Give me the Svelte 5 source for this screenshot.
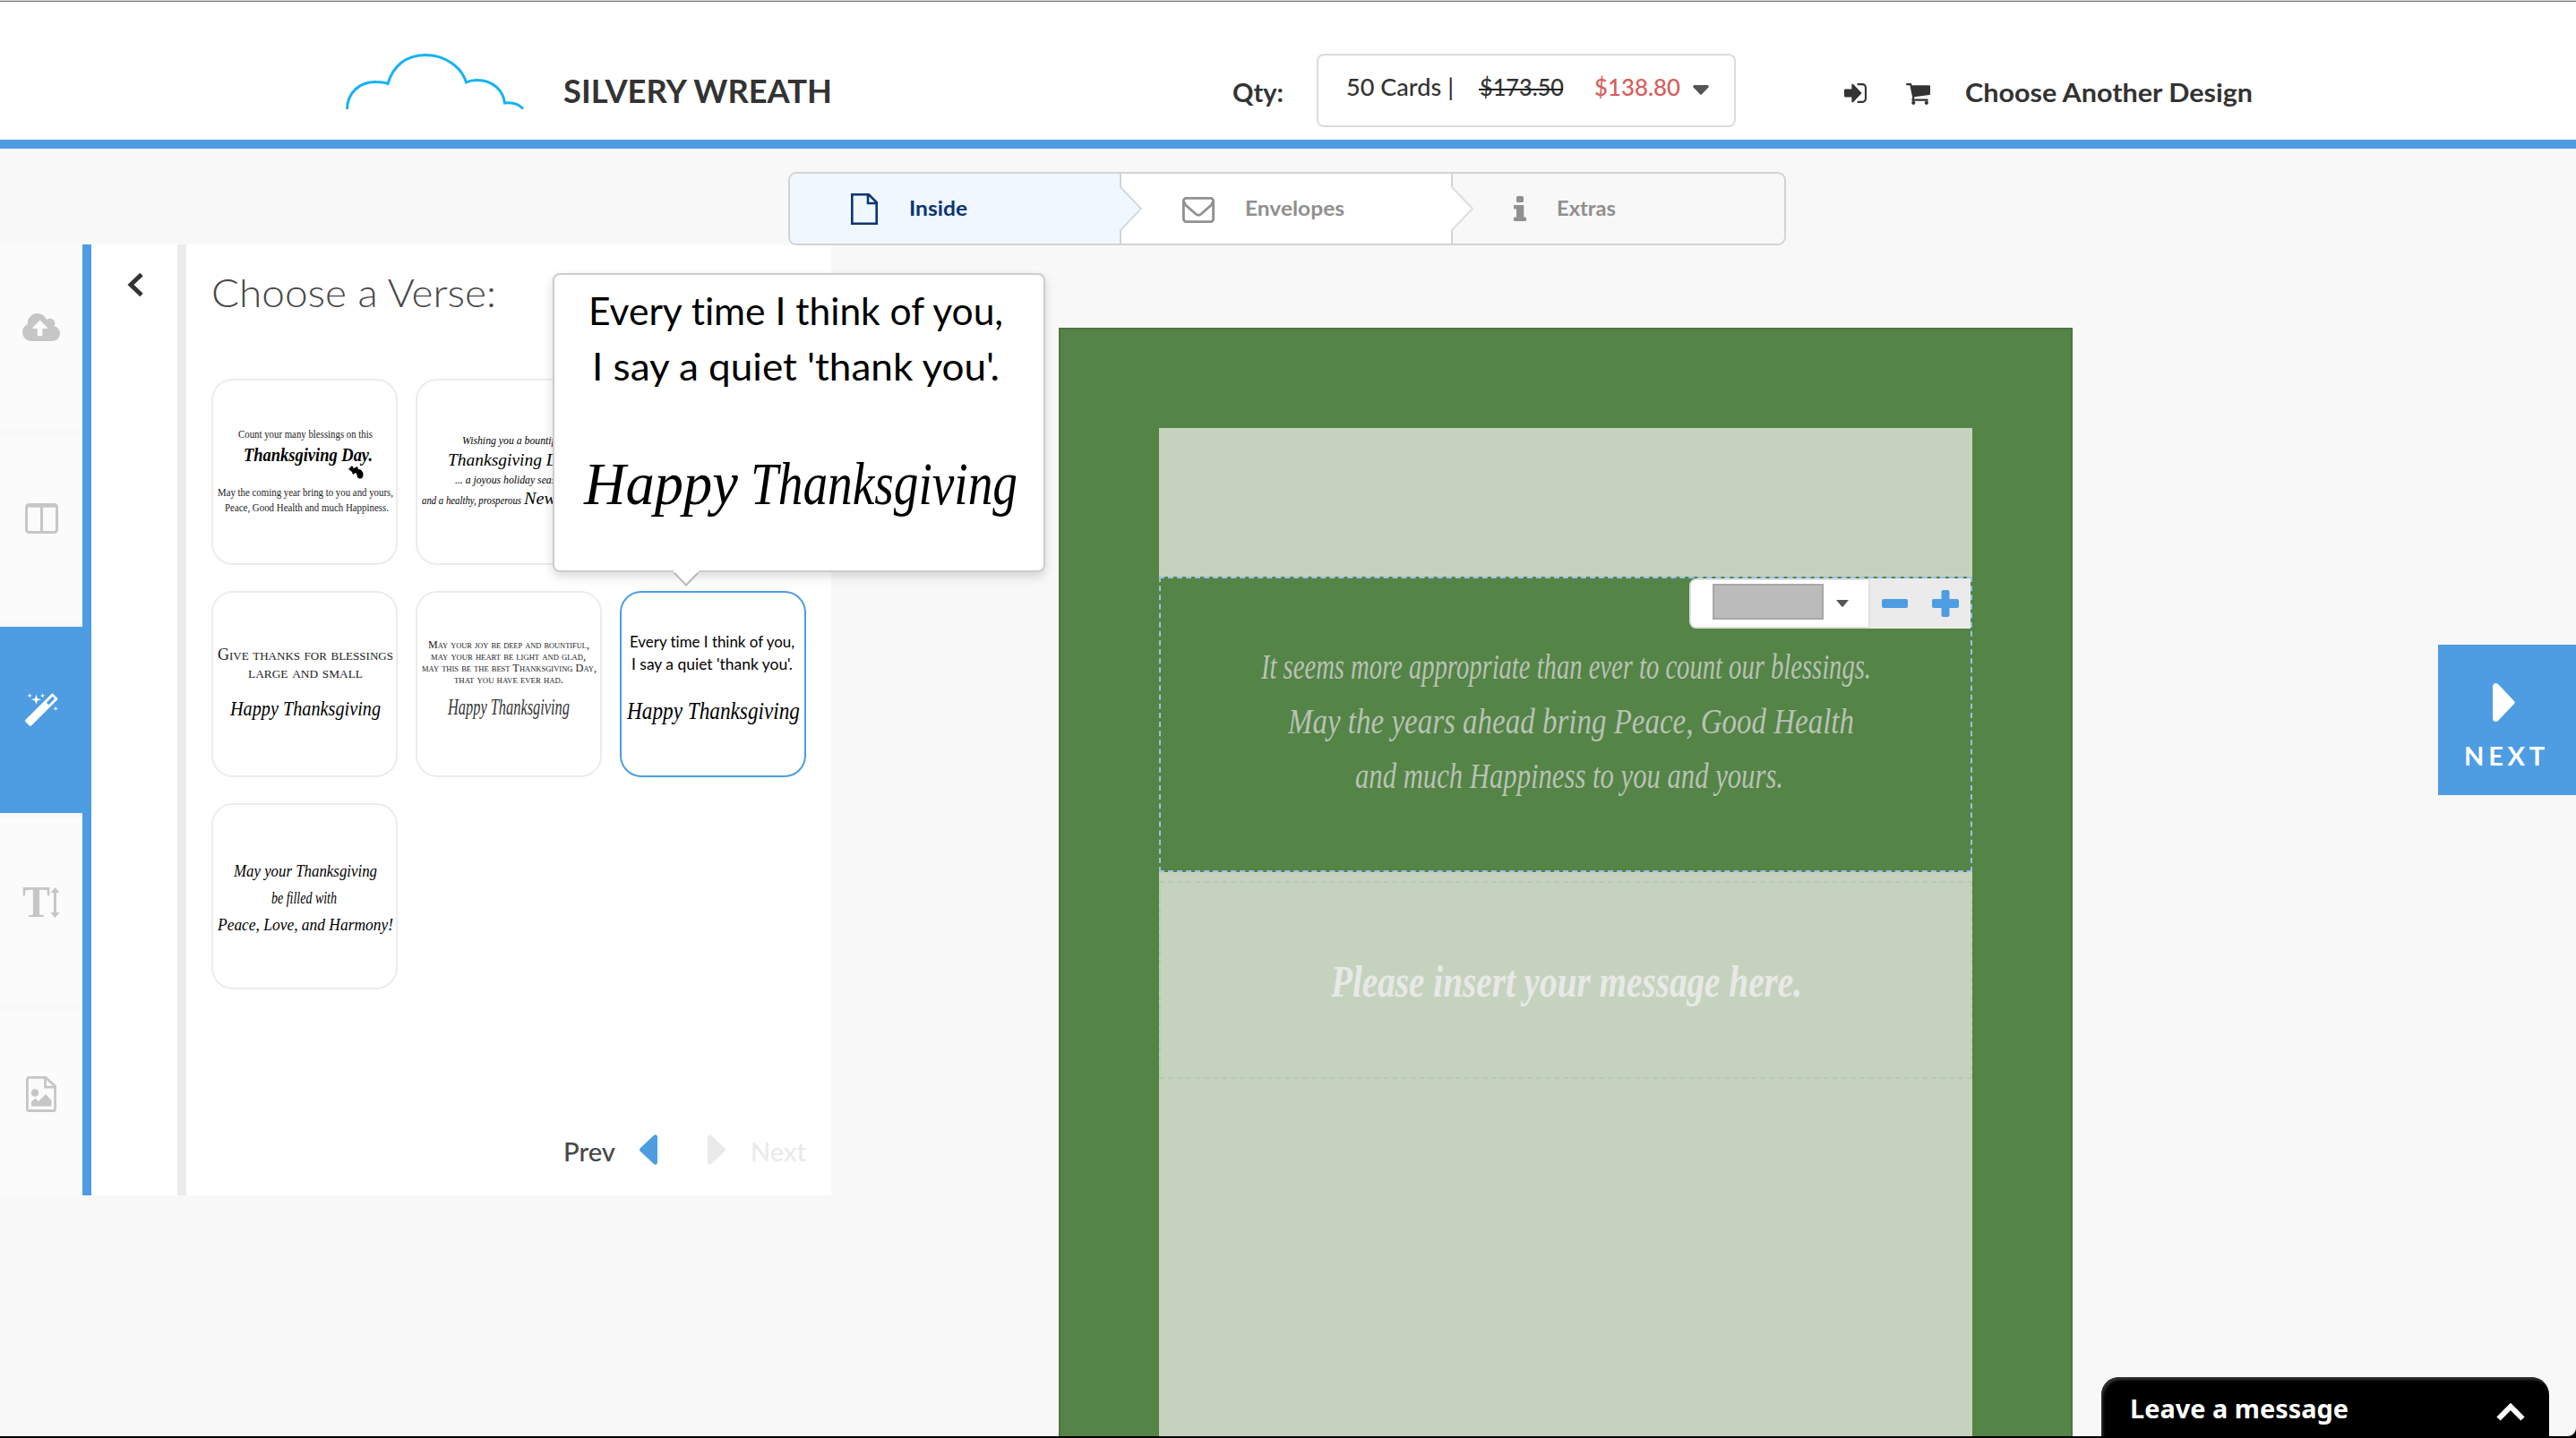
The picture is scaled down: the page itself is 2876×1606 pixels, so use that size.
<script>
  const tools = ['upload', 'layout', 'verse', 'text', 'image'];
  let activeTool = $state('verse');
  let selected = $state(5);

  // Each line: t = text, x/y = left edge and baseline, w = set width, s = font size, k = style
  const verses = [
    {
      leaf: true,
      lines: [
        { t: 'Count your many blessings on this', x: 30, y: 66, w: 150, s: 13, k: 'old' },
        { t: 'Thanksgiving Day.', x: 36, y: 92, w: 144, s: 20, k: 'script heavy' },
        { t: 'May the coming year bring to you and yours,', x: 7, y: 131, w: 196, s: 13, k: 'old' },
        { t: 'Peace, Good Health and much Happiness.', x: 15, y: 148, w: 183, s: 13, k: 'old' }
      ]
    },
    {
      lines: [
        { t: 'Wishing you a bountiful', x: 52, y: 73, w: 112, s: 12, k: 'script' },
        { t: 'Thanksgiving Day,', x: 36, y: 97, w: 146, s: 19, k: 'script' },
        { t: '... a joyous holiday season', x: 44, y: 117, w: 124, s: 12, k: 'script' },
        { t: 'and a healthy, prosperous', x: 7, y: 140, w: 111, s: 12, k: 'script' },
        { t: 'New Year.', x: 121, y: 140, w: 80, s: 19, k: 'script' }
      ]
    },
    { lines: [] },
    {
      lines: [
        { t: 'Give thanks for blessings', x: 7, y: 77, w: 196, s: 18, k: 'caps' },
        { t: 'large and small', x: 41, y: 97, w: 128, s: 18, k: 'caps' },
        { t: 'Happy Thanksgiving', x: 21, y: 139, w: 168, s: 23, k: 'script' }
      ]
    },
    {
      lines: [
        { t: 'May your joy be deep and bountiful,', x: 14, y: 64, w: 180, s: 13, k: 'caps' },
        { t: 'may your heart be light and glad,', x: 17, y: 77, w: 173, s: 13, k: 'caps' },
        { t: 'may this be the best Thanksgiving Day,', x: 7, y: 90, w: 195, s: 13, k: 'caps' },
        { t: 'that you have ever had.', x: 43, y: 103, w: 122, s: 13, k: 'caps' },
        { t: 'Happy Thanksgiving', x: 36, y: 138, w: 136, s: 25, k: 'script thin' }
      ]
    },
    {
      lines: [
        { t: 'Every time I think of you,', x: 11, y: 63, w: 184, s: 17, k: 'humanist' },
        { t: "I say a quiet 'thank you'.", x: 13, y: 88, w: 180, s: 17, k: 'humanist' },
        { t: 'Happy Thanksgiving', x: 8, y: 143, w: 193, s: 27, k: 'script' }
      ]
    },
    {
      lines: [
        { t: 'May your Thanksgiving', x: 25, y: 82, w: 160, s: 19, k: 'script' },
        { t: 'be filled with', x: 67, y: 112, w: 73, s: 18, k: 'script' },
        { t: 'Peace, Love, and Harmony!', x: 7, y: 142, w: 196, s: 19, k: 'script' }
      ]
    }
  ];
</script>

{#snippet label(text, width, size, kind)}
  <svg class="label {kind}" {width} height={Math.round(size * 0.72)}>
    <text x="0" y={Math.round(size * 0.72)} font-size={size} textLength={width} lengthAdjust="spacingAndGlyphs">{text}</text>
  </svg>
{/snippet}

{#snippet toolIcon(name)}
  {#if name === 'upload'}
    <svg class="tool-icon" width="42" height="31" viewBox="-64 128 1920 1408"><path fill="currentColor" d="M1216 864q0-14-9-23l-352-352q-9-9-23-9t-23 9l-351 351q-10 12-10 24 0 14 9 23t23 9h224v352q0 13 9.500 22.500t22.500 9.500h192q13 0 22.500-9.500t9.500-22.500v-352h224q13 0 22.500-9.500t9.500-22.500zm640 288q0 159-112.500 271.500t-271.500 112.500h-1088q-185 0-316.500-131.500t-131.500-316.500q0-130 70-240t188-165q-2-30-2-43 0-212 150-362t362-150q156 0 285.500 87t188.500 231q71-62 166-62 106 0 181 75t75 181q0 76-41 138 130 31 213.500 135.500t83.500 238.500z" /></svg>
  {:else if name === 'layout'}
    <svg class="tool-icon" width="37" height="34" viewBox="0 0 37 34" fill="none" stroke="currentColor" stroke-width="3"><rect x="1.500" y="1.500" width="34" height="31" rx="3" /><path d="M2 3.200h33M18.500 3v29" /></svg>
  {:else if name === 'verse'}
    <svg class="tool-icon" width="37" height="37" viewBox="91 0 1637 1637"><path fill="currentColor" d="M1254 581l293-293-107-107-293 293zm447-293q0 27-18 45l-1286 1286q-18 18-45 18t-45-18l-198-198q-18-18-18-45t18-45l1286-1286q18-18 45-18t45 18l198 198q18 18 18 45zm-1351-190l98 30-98 30-30 98-30-98-98-30 98-30 30-98zm350 162l196 60-196 60-60 196-60-196-196-60 196-60 60-196zm930 478l98 30-98 30-30 98-30-98-98-30 98-30 30-98zm-640-640l98 30-98 30-30 98-30-98-98-30 98-30 30-98z" /></svg>
  {:else if name === 'text'}
    <svg class="tool-icon text-icon" width="40" height="34" viewBox="0 0 40 34" fill="currentColor"><text class="tee" x="-1" y="33" font-size="50" textLength="31" lengthAdjust="spacingAndGlyphs">T</text><path d="M35.500 0l5 6h-3.500v22h3.500l-5 6-5-6h3.500V6h-3.500z" /></svg>
  {:else}
    <svg class="tool-icon image-icon" width="34" height="40" viewBox="0 0 34 40" fill="none" stroke="currentColor" stroke-width="2.800"><path d="M3.400 1.400H22L32.600 11v25.500q0 2-2 2H3.400q-2 0-2-2v-33q0-2.100 2-2.100zM21.500 1.400V12.200h11" /><circle cx="10" cy="18.500" r="4.200" fill="currentColor" stroke="none" /><path d="M6 33.500v-5l4.500-4 3.500 3.500 8-8 6.500 7v6.500z" fill="currentColor" stroke="none" /></svg>
  {/if}
{/snippet}

<div class="page">
  <header class="topbar">
    <svg class="cloud" width="199" height="63" viewBox="0 0 199 63" fill="none" stroke="#14b3f4" stroke-width="3"><path d="M1.500 62C2 43 16 31 34 31.500q8 0 13 2C53 13 68 1.500 89 1.500c22 0 40 13 45.500 30.500q5-2.500 12-2.500c18 0 29.500 12 31 25.500q13-1.500 20.500 6.500" /></svg>
    <h1 class="design">{@render label('SILVERY WREATH', 300, 36, 'ink bold')}</h1>
    <div class="qty">{@render label('Qty:', 57, 28, 'ink bold')}</div>
    <button class="qty-box">
      {@render label('50 Cards |', 120, 26, 'ink medium')}
      <s class="old-price">{@render label('$173.50', 94, 26, 'ink medium')}</s>
      {@render label('$138.80', 96, 26, 'sale medium')}
      <svg class="caret" width="18" height="11" viewBox="0 0 18 11" fill="#555"><path d="M1.500 0h15q2 .7 1 2.500L10 10.200q-1 1-2 0L.5 2.500Q-.5.700 1.500 0z" /></svg>
    </button>
    <div class="account">
      <svg width="25" height="22" viewBox="128 256 1536 1280" preserveAspectRatio="none" fill="#333"><path d="M1312 896q0 26-19 45l-544 544q-19 19-45 19t-45-19-19-45v-288h-448q-26 0-45-19t-19-45v-384q0-26 19-45t45-19h448v-288q0-26 19-45t45-19 45 19l544 544q19 19 19 45zm352-352v704q0 119-84.500 203.500t-203.500 84.500h-320q-13 0-22.500-9.500t-9.500-22.500q0-4-1-20t-.5-26.500 3-23.500 10-19.500 20.500-6.500h320q66 0 113-47t47-113v-704q0-66-47-113t-113-47h-312l-11.500-1-11.500-3-8-5.500-7-9-2-13.500q0-4-1-20t-.5-26.500 3-23.500 10-19.500 20.500-6.500h320q119 0 203.500 84.500t84.500 203.500z" /></svg>
      <svg class="cart" width="27" height="24" viewBox="64 256 1664 1408" preserveAspectRatio="none" fill="#333"><path d="M704 1536q0 52-38 90t-90 38-90-38-38-90 38-90 90-38 90 38 38 90zm896 0q0 52-38 90t-90 38-90-38-38-90 38-90 90-38 90 38 38 90zm128-1088v512q0 24-16.500 42.500t-40.500 21.500l-1044 122q13 60 13 70 0 16-24 64h920q26 0 45 19t19 45-19 45-45 19h-1024q-26 0-45-19t-19-45q0-11 8-31.500t16-36 21.500-40 15.500-29.500l-177-823h-204q-26 0-45-19t-19-45 19-45 45-19h256q16 0 28.500 6.500t19.500 15.500 13 24.500 8 26 5.500 29.500 4.500 26h1201q26 0 45 19t19 45z" /></svg>
      {@render label('Choose Another Design', 321, 29, 'ink bold')}
    </div>
  </header>

  <nav class="steps">
    <div class="step current">
      <svg class="file" width="30" height="35" viewBox="0 0 30 35" fill="none" stroke="#0a3575" stroke-width="2.600"><path d="M1.300 1.300H20L28.700 10v23.700H1.300zM19 1.300V11h9.700" /></svg>
      {@render label('Inside', 65, 23, 'navy bold')}
      <svg class="notch" width="26" height="50" viewBox="0 0 26 50"><path d="M0 0L24 25 0 50" fill="#f0f7ff" stroke="#d2d9e0" stroke-width="2" /></svg>
    </div>
    <div class="step open">
      <svg class="mail" width="36" height="29" viewBox="0 0 36 29" fill="none" stroke="#909090" stroke-width="2.800"><rect x="1.400" y="1.400" width="33.200" height="26.200" rx="3" /><path d="M2 5q0 2.500 2.500 4.700L15 19q3 2.400 6 0L31.500 9.700Q34 7.500 34 5" /></svg>
      {@render label('Envelopes', 111, 23, 'muted bold')}
      <svg class="notch" width="26" height="50" viewBox="0 0 26 50"><path d="M0 0L24 25 0 50" fill="#fff" stroke="#dedede" stroke-width="2" /></svg>
    </div>
    <div class="step last">
      <svg class="info" width="14" height="28" viewBox="0 0 14 28" fill="#909090"><rect x="3" y="0" width="8" height="7" rx="1.500" /><path d="M1 10h9.500q.8 0 .8.800V23.500H13q1 0 1 1V27q0 1-1 1H1q-1 0-1-1v-2.500q0-1 1-1h2V14.500H1q-1 0-1-1V11q0-1 1-1z" /></svg>
      {@render label('Extras', 66, 23, 'muted bold')}
    </div>
  </nav>

  <main class="workspace">
    <aside class="tools">
      {#each tools as tool}
        <button class="tool" class:on={tool === activeTool} onclick={() => (activeTool = tool)} aria-label={tool}>
          {@render toolIcon(tool)}
        </button>
      {/each}
    </aside>
    <div class="collapse">
      <svg width="19" height="28" viewBox="0 0 19 28" fill="none" stroke="#333" stroke-width="5"><path d="M16 2.500L4 14l12 11.500" /></svg>
    </div>

    <section class="panel">
      <h2>{@render label('Choose a Verse:', 318, 43, 'light')}</h2>
      <div class="grid">
        {#each verses as verse, i}
          {#if i === 2}
            <div class="slot"></div>
          {:else}
            <button class="card" class:picked={i === selected} onclick={() => (selected = i)} aria-label="Verse {i + 1}">
              <svg width="204" height="204" viewBox="2 2 204 204">
                {#each verse.lines as l}
                  <text class={l.k} x={l.x} y={l.y} font-size={l.s} textLength={l.w} lengthAdjust="spacingAndGlyphs">{l.t}</text>
                {/each}
                {#if verse.leaf}
                  <path d="M153 101l4-4 2 3 4-2 1 3 4 1-3 3-1 3-3-3-3 2-1-3z" />
                  <ellipse cx="166" cy="107" rx="3.500" ry="4.500" />
                {/if}
              </svg>
            </button>
          {/if}
        {/each}
      </div>
      <div class="pager">
        {@render label('Prev', 58, 29, 'slate medium')}
        <svg class="arrow-prev" width="20" height="34" viewBox="0 0 20 34" fill="#4e9ce2"><path d="M20 2v30q-1.500 3-4 1L1 19q-2-2 0-4L16 1q2.500-2 4 1z" /></svg>
        <svg class="arrow-next" width="20" height="34" viewBox="0 0 20 34" fill="#eaeaea"><path d="M0 2v30q1.500 3 4 1l15-14q2-2 0-4L4 1Q1.500-1 0 2z" /></svg>
        {@render label('Next', 62, 29, 'faint medium')}
      </div>

      <div class="preview">
        <svg width="546" height="330" viewBox="619 307 546 330">
          <text class="humanist" x="657" y="363" font-size="43" textLength="463" lengthAdjust="spacingAndGlyphs">Every time I think of you,</text>
          <text class="humanist" x="661" y="425" font-size="43" textLength="455" lengthAdjust="spacingAndGlyphs">I say a quiet 'thank you'.</text>
          <text class="script" x="652" y="563" font-size="68" textLength="172" lengthAdjust="spacingAndGlyphs">Happy</text>
          <text class="script" x="838" y="563" font-size="68" textLength="298" lengthAdjust="spacingAndGlyphs">Thanksgiving</text>
        </svg>
        <svg class="tip" width="30" height="18" viewBox="0 0 30 18"><path d="M1 1L15 15.500 29 1" fill="#fff" stroke="#b8b8b8" stroke-width="2" /><path d="M1 0h28" stroke="#fff" stroke-width="3" /></svg>
      </div>
    </section>

    <section class="sheet">
      <div class="paper">
        <div class="zone chosen">
          <div class="zone-bar">
            <div class="color-pick">
              <span class="swatch"></span>
              <svg width="14" height="8" viewBox="0 0 14 8" fill="#555"><path d="M0 0h14L7.700 7.400q-.7.700-1.400 0z" /></svg>
            </div>
            <div class="sizer">
              <svg width="29" height="10" viewBox="0 0 29 10" fill="#4e9ce2"><rect width="29" height="10" rx="2" /></svg>
              <svg width="30" height="30" viewBox="0 0 30 30" fill="#4e9ce2"><rect y="10" width="30" height="10" rx="2" /><rect x="10.500" y="0" width="9" height="30" rx="2" /></svg>
            </div>
          </div>
          <svg width="904" height="326" viewBox="1296 646 904 326">
            <text class="script pale" x="1408" y="758" font-size="39" textLength="681" lengthAdjust="spacingAndGlyphs">It seems more appropriate than ever to count our blessings.</text>
            <text class="script pale" x="1438" y="819" font-size="39" textLength="632" lengthAdjust="spacingAndGlyphs">May the years ahead bring Peace, Good Health</text>
            <text class="script pale" x="1513" y="880" font-size="39" textLength="478" lengthAdjust="spacingAndGlyphs">and much Happiness to you and yours.</text>
          </svg>
        </div>
        <div class="zone blank">
          <svg width="904" height="217" viewBox="1296 985 904 217">
            <text class="script hint" x="1486" y="1112" font-size="51" textLength="526" lengthAdjust="spacingAndGlyphs">Please insert your message here.</text>
          </svg>
        </div>
      </div>
    </section>
  </main>

  <button class="next">
    <svg width="25" height="43" viewBox="0 0 25 43" fill="#fff"><path d="M0 3.500Q.5 0 3.500 0 5 0 6.500 1.500L24 20q1.500 1.500 0 3L6.500 41.500Q5 43 3.500 43 .5 43 0 39.500z" /></svg>
    <span>NEXT</span>
  </button>

  <button class="chat">
    {@render label('Leave a message', 244, 29, 'chat-text')}
    <svg width="32" height="21" viewBox="0 0 32 21" fill="none" stroke="#fff" stroke-width="6"><path d="M2.500 18.500L16 5l13.500 13.500" /></svg>
  </button>
</div>

<style>
  :global(body) { background: #000; }
  .page {
    position: relative;
    box-sizing: border-box;
    width: 2876px;
    height: 1604px;
    overflow: hidden;
    background: #f8f8f8;
    border-bottom-right-radius: 9px;
    font-family: Lato, 'Open Sans', sans-serif;
  }
  .page * { box-sizing: border-box; }
  button { padding: 0; border: 0; background: none; font: inherit; text-align: left; }
  h1, h2 { margin: 0; font-size: 0; }
  svg { display: block; flex: none; overflow: visible; }

  .ink { fill: #333; }
  .sale { fill: #d95c5c; }
  .navy { fill: #0a3575; }
  .muted { fill: #8f8f8f; }
  .slate { fill: #484848; }
  .faint { fill: #eaeaea; }
  .light { fill: #484848; font-weight: 300; }
  .bold { font-weight: 700; }
  .medium { font-weight: 500; }
  .chat-text { fill: #fff; font-family: 'Noto Sans', 'Open Sans', sans-serif; font-weight: 700; }

  .script { font-family: 'Liberation Serif', serif; font-style: italic; }
  .heavy { font-weight: 700; }
  .thin { fill: #333; }
  .old { font-family: 'Liberation Serif', serif; fill: #222; }
  .caps { font-family: 'Liberation Serif', serif; font-variant: small-caps; fill: #222; }
  .humanist { font-family: Lato, sans-serif; font-variant-ligatures: none; fill: #000; }
  .pale { fill: #b9c2b6; }
  .hint { fill: #e8e9e7; font-weight: 700; }
  .tee { font-family: 'Liberation Serif', serif; font-weight: 700; }

  .topbar {
    display: flex;
    align-items: flex-start;
    height: 166px;
    padding: 58px 0 0 386px;
    background: #fff;
    border-top: 1px solid #d8d8d8;
    border-bottom: 10px solid #4e9ce2;
    box-shadow: inset 0 1px #777;
  }
  .cloud { margin-top: 1px; }
  .design { margin: 30px 0 0 44px; }
  .qty { margin: 35px 0 0 447px; }
  .qty-box {
    display: flex;
    align-items: flex-start;
    width: 468px;
    height: 82px;
    margin: 1px 0 0 37px;
    padding: 26px 0 0 31px;
    border: 2px solid #dcdcdc;
    border-radius: 8px;
  }
  .old-price { position: relative; margin: 0 34px 0 29px; text-decoration: none; }
  .old-price::after { content: ''; position: absolute; top: 11px; left: -1px; width: 94px; height: 2px; background: #222; }
  .caret { margin: 7px 0 0 14px; }
  .account { display: flex; align-items: flex-start; margin: 34px 0 0 121px; }
  .account .cart { margin: 0 39px 0 44px; }

  .steps {
    position: relative;
    z-index: 1;
    display: flex;
    width: 1114px;
    height: 82px;
    margin: 26px 0 0 880px;
    border: 2px solid #d3d3d3;
    border-radius: 9px;
  }
  .step { position: relative; display: flex; align-items: center; width: 370px; padding-bottom: 2px; }
  .step + .step { border-left: 2px solid #d3d3d3; }
  .current { width: 368px; background: #f0f7ff; border-radius: 7px 0 0 7px; padding-left: 68px; }
  .open { background: #fff; padding-left: 68px; }
  .last { padding-left: 68px; }
  .file { margin-right: 35px; margin-top: 2px; }
  .mail { margin-right: 34px; margin-top: 5px; }
  .info { margin-right: 34px; margin-top: 2px; }
  .notch { position: absolute; z-index: 2; right: -26px; top: 14px; }

  .workspace { display: flex; align-items: flex-start; margin-top: -1px; }
  .tools { display: flex; flex-direction: column; gap: 6px; width: 102px; height: 1062px; border-right: 10px solid #4e9ce2; }
  .tool { display: flex; justify-content: center; align-items: center; height: 208px; padding: 0 0 23px; background: #fbfbfb; color: #c6c6c6; }
  .tool.on { background: #4e9ce2; color: #fff; }
  .text-icon { margin-top: 3px; }
  .image-icon { margin-top: 5px; }
  .collapse { width: 106px; height: 1062px; padding: 31px 0 0 40px; background: #fff; border-right: 10px solid #ebebeb; }

  .panel { position: relative; width: 720px; height: 1062px; padding: 39px 28px 0; background: #fff; }
  .grid { display: grid; grid-template-columns: repeat(3, 208px); gap: 29px 20px; margin-top: 80px; }
  .card { width: 208px; height: 208px; border: 2px solid #ececec; border-radius: 24px; }
  .card.picked { border-color: #4e9ce2; }
  .pager { display: flex; align-items: center; margin: 167px 0 0 393px; }
  .arrow-prev { margin: -5px 56px 0 27px; }
  .arrow-next { margin: -5px 28px 0 0; }

  .preview {
    position: absolute;
    left: 409px;
    top: 32px;
    width: 550px;
    height: 334px;
    z-index: 3;
    background: #fff;
    border: 2px solid #ccc;
    border-radius: 8px;
    box-shadow: 0 5px 12px rgba(0, 0, 0, 0.14);
  }
  .tip { position: absolute; left: 132px; top: 331px; }

  .sheet { width: 1132px; height: 1300px; margin: 93px 0 0 254px; padding: 110px 110px 0; background: #548446; border: 2px solid #4a763f; }
  .paper { width: 908px; height: 1200px; padding-top: 166px; background: #c5d3be; }
  .zone { position: relative; width: 908px; }
  .chosen { height: 330px; background: #548446; border: 2px dashed #9cc0ea; }
  .blank { height: 221px; margin-top: 10px; border: 2px dashed #b9cab3; }
  .zone-bar { position: absolute; z-index: 1; top: 0; right: 0; display: flex; width: 314px; height: 56px; }
  .color-pick { display: flex; align-items: center; gap: 14px; width: 202px; padding: 0 0 0 24px; background: #fff; border: 2px solid #e0e0e0; border-radius: 8px 0 0 8px; }
  .swatch { width: 124px; height: 40px; margin-top: -4px; background: #bbb; border: 2px solid #a7a7a7; }
  .sizer { display: flex; flex: 1; align-items: center; gap: 27px; padding-left: 13px; background: #ebebeb; }

  .next { position: absolute; right: 0; top: 720px; display: flex; flex-direction: column; align-items: flex-start; width: 154px; height: 168px; padding: 43px 0 0 61px; background: #4e9ce2; color: #fff; }
  .next span { margin: 20px 0 0 -32px; font-size: 29px; line-height: 35px; font-weight: 700; letter-spacing: 4.800px; }

  .chat { position: absolute; left: 2346px; bottom: 0; display: flex; justify-content: space-between; align-items: flex-start; width: 500px; height: 66px; padding: 25px 27px 0 32px; background: #000; border-radius: 20px 20px 0 0; box-shadow: inset 2px 3px 3px #333; }
  .chat svg:last-child { margin-top: 3px; }
</style>
